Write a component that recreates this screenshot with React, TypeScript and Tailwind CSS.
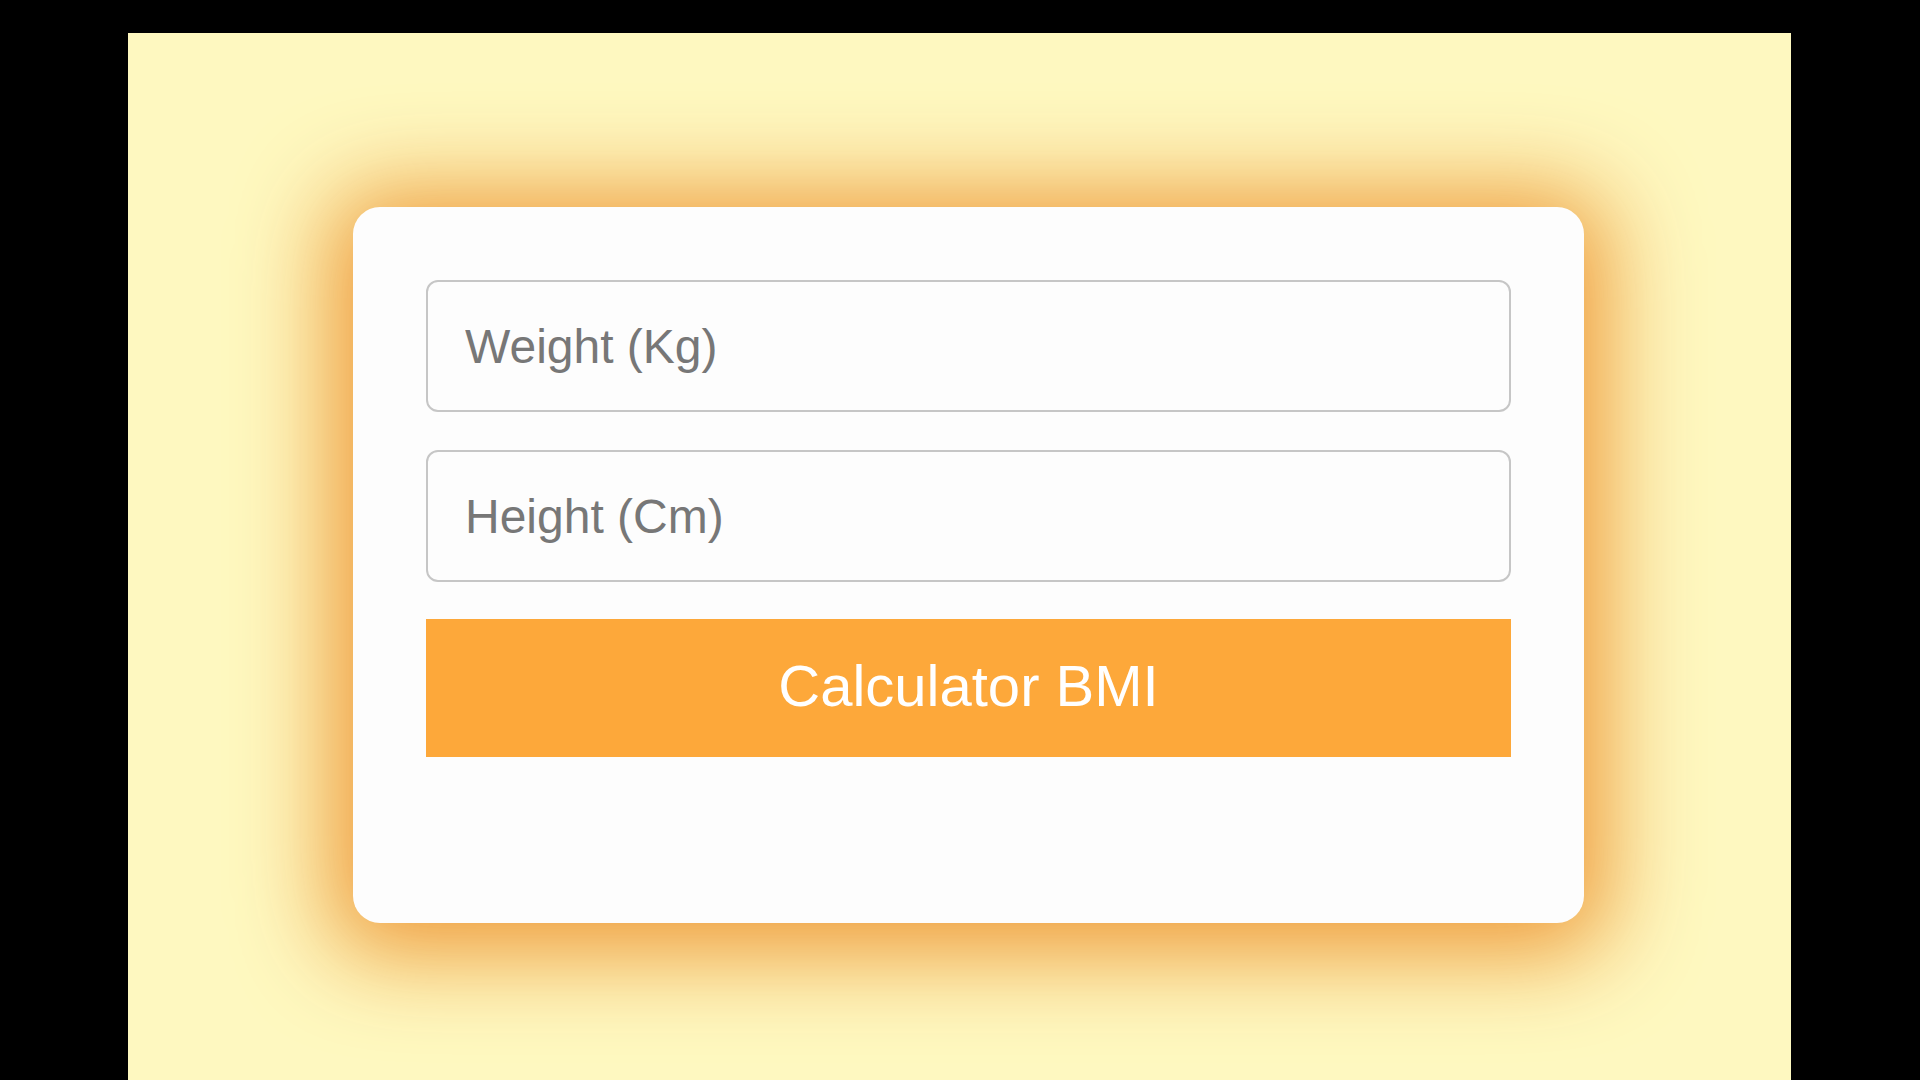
import React from "react";

export default function App() {
  return (
    <div className="w-[1920px] h-[1080px] bg-black pl-[128px] pr-[129px] pt-[33px] overflow-hidden" style={{ fontFamily: '"Liberation Sans", Arial, sans-serif' }}>
      <div className="w-full h-full bg-[#fef8c0] pl-[225px] pt-[174px]">
        <div className="w-[1231px] h-[716px] bg-[#fdfdfd] rounded-[27px] shadow-[0_8px_90px_24px_rgba(236,145,45,0.9)] px-[73px] pt-[73px] flex flex-col">
          <input
            type="text"
            placeholder="Weight (Kg)"
            className="w-full h-[132px] shrink-0 border-2 border-[#c6c6c6] rounded-[12px] pl-[37px] text-[48px] bg-[#fdfdfd] outline-none placeholder:text-[#777777] text-[#555]"
          />
          <input
            type="text"
            placeholder="Height (Cm)"
            className="w-full h-[132px] shrink-0 mt-[38px] border-2 border-[#c6c6c6] rounded-[12px] pl-[37px] text-[48px] bg-[#fdfdfd] outline-none placeholder:text-[#777777] text-[#555]"
          />
          <button className="w-full h-[138px] shrink-0 mt-[37px] pb-[6px] bg-[#fda83a] text-white text-[58px] flex items-center justify-center">
            Calculator BMI
          </button>
        </div>
      </div>
    </div>
  );
}
